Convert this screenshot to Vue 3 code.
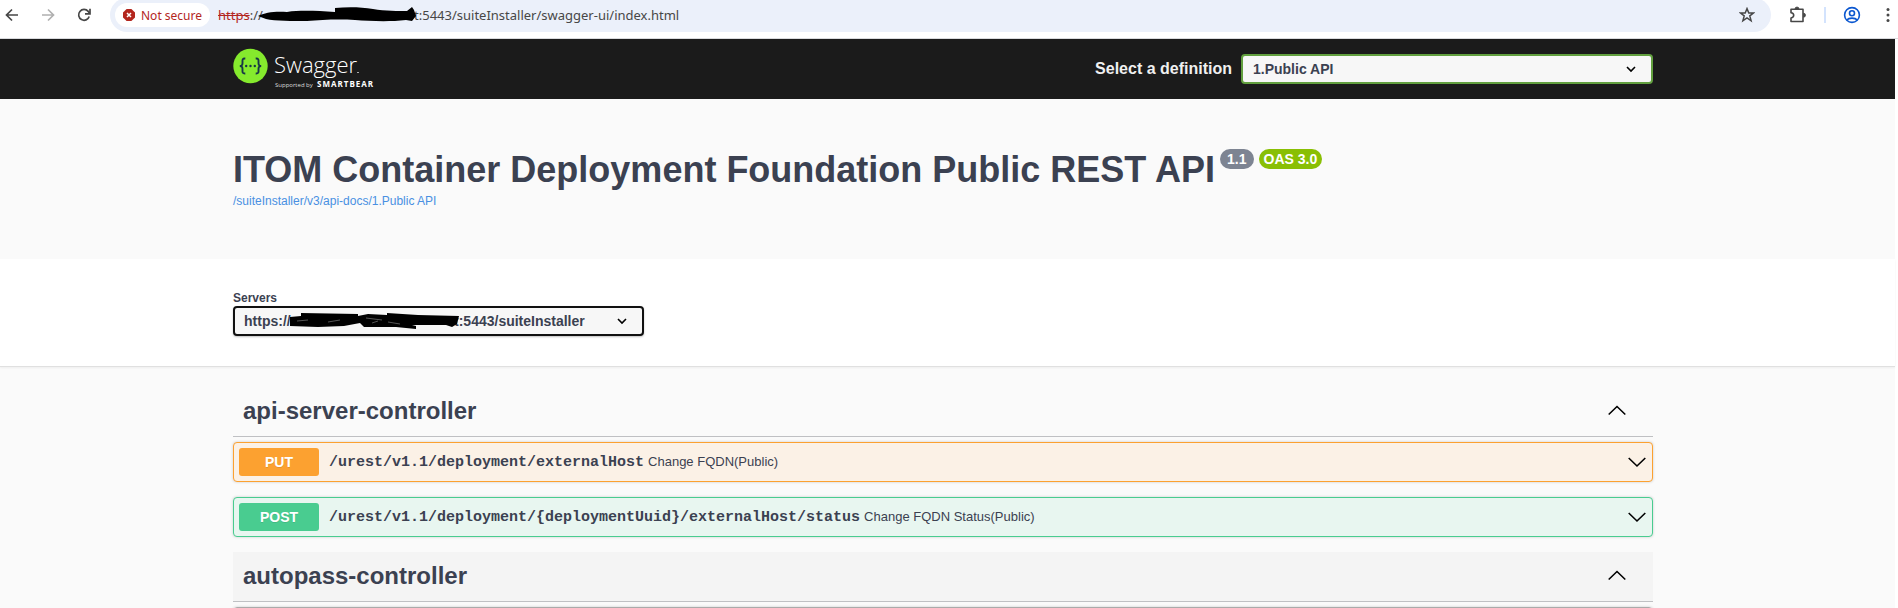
<script setup>
import { ref } from 'vue'

const gap = '\u00a0'.repeat(42)
const definition = ref('1.Public API')
const server = ref('main')
const servers = [{ id: 'main', label: `https://${gap}t:5443/suiteInstaller` }]

const sections = [
  {
    name: 'api-server-controller',
    hovered: false,
    operations: [
      { method: 'PUT', path: '/urest/v1.1/deployment/externalHost', summary: 'Change FQDN(Public)' },
      { method: 'POST', path: '/urest/v1.1/deployment/{deploymentUuid}/externalHost/status', summary: 'Change FQDN Status(Public)' },
    ],
  },
  { name: 'autopass-controller', hovered: true, operations: [] },
]
</script>

<template>
  <div class="window">
    <header class="browser">
      <nav class="nav">
        <button class="icon" aria-label="Back">
          <svg width="16" height="16" viewBox="0 0 16 16"><path d="M14 8H3M8 2.5L2.5 8L8 13.5" fill="none" stroke="#474747" stroke-width="1.7" /></svg>
        </button>
        <button class="icon" aria-label="Forward">
          <svg width="16" height="16" viewBox="0 0 16 16"><path d="M2 8H13M8 2.5L13.5 8L8 13.5" fill="none" stroke="#b0b0b0" stroke-width="1.7" /></svg>
        </button>
        <button class="icon" aria-label="Reload">
          <svg width="16" height="16" viewBox="0 0 16 16"><path d="M13.2 9.5A5.4 5.4 0 1 1 12.2 4.4L13.5 6" fill="none" stroke="#474747" stroke-width="1.7" /><path d="M14 1.8V6.8H9" fill="none" stroke="#474747" stroke-width="1.7" /></svg>
        </button>
      </nav>
      <div class="address">
        <button class="chip">
          <svg width="12" height="12" viewBox="0 0 12 12"><path d="M3.6 0H8.4L12 3.6V8.4L8.4 12H3.6L0 8.4V3.6Z" fill="#b3261e" /><path d="M4 4L8 8M8 4L4 8" stroke="#fff" stroke-width="1.5" /></svg>
          Not secure
        </button>
        <div class="url">
          <span><s>https</s>://</span>
          <span class="rest">t:5443/suiteInstaller/swagger-ui/index.html</span>
          <svg class="scribble" width="162" height="18" viewBox="0 0 162 18">
            <path d="M1 9C8 5 20 4 30 5C44 3 60 4 78 5V1C90 0 104 0 116 2C128 4 142 4 150 4L155 0L157 3L159 9L155 14L149 13C132 15 112 14 98 13C80 12 64 13 50 14C36 14 18 14 9 12Z" fill="#000" />
          </svg>
        </div>
        <button class="icon star" aria-label="Bookmark">
          <svg width="16" height="16" viewBox="0 0 16 16"><path d="M8 1.6L9.8 6H14.5L10.8 8.9L12.1 13.8L8 11L3.9 13.8L5.2 8.9L1.5 6H6.2Z" fill="none" stroke="#474747" stroke-width="1.5" /></svg>
        </button>
      </div>
      <div class="tools">
        <button class="icon" aria-label="Extensions">
          <svg width="18" height="18" viewBox="0 0 18 18"><path d="M2 3.2H14V15.5H2V12C5.6 11.5 5.6 7.2 2 6.8Z" fill="none" stroke="#474747" stroke-width="1.6" stroke-linejoin="round" /><path d="M6 3A2 2 0 0 1 10 3ZM14.5 7.2A2 2 0 0 1 14.5 11.2Z" fill="#474747" stroke="#474747" stroke-width="0.8" /></svg>
        </button>
        <span class="divider"></span>
        <button class="icon" aria-label="Profile">
          <svg width="18" height="18" viewBox="0 0 18 18" fill="none" stroke="#0b57d0" stroke-width="1.6"><circle cx="9" cy="9" r="7.4" /><circle cx="9" cy="7.2" r="2.5" /><path d="M3.7 14C6 11.5 12 11.5 14.3 14" /></svg>
        </button>
        <button class="icon" aria-label="Menu">
          <svg width="4" height="16" viewBox="0 0 4 16" fill="#474747"><circle cx="2" cy="2.5" r="1.5" /><circle cx="2" cy="8" r="1.5" /><circle cx="2" cy="13.5" r="1.5" /></svg>
        </button>
      </div>
    </header>

    <main class="page">
      <div class="topbar">
        <div class="wrap bar">
          <a class="logo" href="#" aria-label="Swagger">
            <svg width="145" height="44" viewBox="0 0 145 44">
              <circle cx="17.5" cy="19" r="17.2" fill="#85ea2d" />
              <g fill="none" stroke="#173647" stroke-width="1.9">
                <path d="M12.3 11.5C9.2 11.3 9.4 13 9.5 15C9.6 17.4 9.4 19 6.8 19C9.4 19 9.6 20.6 9.5 23C9.4 25 9.2 26.7 12.3 26.5" />
                <path d="M22.7 11.5C25.8 11.3 25.6 13 25.5 15C25.4 17.4 25.6 19 28.2 19C25.6 19 25.4 20.6 25.5 23C25.6 25 25.8 26.7 22.7 26.5" />
              </g>
              <g fill="#173647"><circle cx="13.2" cy="19" r="1.2" /><circle cx="17.5" cy="19" r="1.2" /><circle cx="21.8" cy="19" r="1.2" /></g>
              <path d="M124 25.500H126" stroke="#aaa" />
              <text class="brand" x="41" y="26">Swagger</text>
              <text class="support" x="42" y="40">Supported by</text>
              <text class="bear" x="84" y="40">SMARTBEAR</text>
            </svg>
          </a>
          <label class="pick">
            <span>Select a definition</span>
            <select v-model="definition" class="select green">
              <option>1.Public API</option>
            </select>
          </label>
        </div>
      </div>

      <section class="wrap info">
        <div class="heading">
          <h1>ITOM Container Deployment Foundation Public REST API</h1>
          <span class="badge">1.1</span>
          <span class="badge oas">OAS 3.0</span>
        </div>
        <a class="doc" href="#">/suiteInstaller/v3/api-docs/1.Public API</a>
      </section>

      <section class="scheme">
        <div class="wrap">
          <label class="servers" for="servers">Servers</label>
          <div class="server-box">
            <select id="servers" v-model="server" class="select dark">
              <option v-for="s in servers" :key="s.id" :value="s.id">{{ s.label }}</option>
            </select>
            <svg class="scribble" width="174" height="18" viewBox="0 0 174 18">
              <path d="M2 5L13 4V1L70 2V4L80 2L99 3V1L130 3L171 4L169 12L164 15L158 13L124 13L128 14V17L108 15L76 15L72 11L56 14L30 15L2 14Z" fill="#000" />
              <path d="M9 9L20 8M40 10L52 8M78 6L94 8M84 11L90 9M100 10L112 12" stroke="#777" stroke-width="0.7" />
            </svg>
          </div>
        </div>
      </section>

      <div class="wrap sections">
        <section v-for="s in sections" :key="s.name">
          <h2 :class="{ hovered: s.hovered }">
            <span>{{ s.name }}</span>
            <button class="icon" :aria-label="`Collapse ${s.name}`">
              <svg width="20" height="20" viewBox="0 0 20 20"><path d="M1.700 13.500L10 5.500L18.300 13.500" fill="none" stroke="#000" stroke-width="1.6" /></svg>
            </button>
          </h2>
          <div v-for="o in s.operations" :key="o.path" class="op" :class="o.method.toLowerCase()">
            <span class="method">{{ o.method }}</span>
            <a class="path" href="#">{{ o.path }}</a>
            <span class="summary">{{ o.summary }}</span>
            <button class="icon" :aria-label="`Expand ${o.path}`">
              <svg width="20" height="20" viewBox="0 0 20 20"><path d="M1.700 6L10 14L18.300 6" fill="none" stroke="#000" stroke-width="1.6" /></svg>
            </button>
          </div>
          <div v-if="!s.operations.length" class="op"></div>
        </section>
      </div>
    </main>
  </div>
</template>

<style>
body {
  background: #fff;
}
</style>

<style scoped>
* {
  box-sizing: border-box;
}
.window {
  height: 100vh;
  overflow: hidden;
  display: flex;
  flex-direction: column;
  font-family: "Liberation Sans", Arial, sans-serif;
  color: #3b4151;
}
.icon {
  display: flex;
  flex: none;
  padding: 0;
  border: 0;
  background: none;
}
.browser {
  flex: none;
  display: flex;
  align-items: center;
  height: 39px;
  padding: 0 8px 8px 4px;
  border-bottom: 1px solid #d9dadd;
  font-family: "Noto Sans", "Open Sans", sans-serif;
}
.nav {
  display: flex;
  gap: 20px;
  margin-right: 18px;
}
.address {
  flex: 1;
  display: flex;
  align-items: center;
  height: 34px;
  padding: 0 16px 0 5px;
  border-radius: 17px;
  background: #ebf0fa;
}
.chip {
  display: flex;
  align-items: center;
  gap: 6px;
  height: 24px;
  padding: 0 8px;
  border: 0;
  border-radius: 12px;
  background: #fff;
  color: #b3261e;
  font: 12px "Noto Sans", "Open Sans", sans-serif;
}
.url {
  position: relative;
  flex: 1;
  display: flex;
  padding-left: 8px;
  font-size: 13px;
  line-height: 18px;
  color: #474747;
}
.url s {
  color: #b3261e;
}
.url .rest {
  position: absolute;
  left: 204px;
}
.url .scribble {
  position: absolute;
  left: 47px;
  top: 1px;
}
.tools {
  display: flex;
  align-items: center;
  gap: 17px;
  margin-left: 18px;
}
.divider {
  width: 2px;
  height: 16px;
  background: #d3e3fd;
}
.tools .icon:last-child {
  margin-left: 8px;
}
.page {
  flex: 1;
  margin-right: 3px;
  background: #fafafa;
}
.wrap {
  width: calc(100% - 475px);
  min-width: 900px;
  margin-left: 233px;
}
.topbar {
  background: #1b1b1b;
}
.bar {
  display: flex;
  align-items: center;
  justify-content: space-between;
  height: 60px;
}
.logo,
.logo svg {
  display: block;
}
.brand {
  font: 300 22px "Open Sans", sans-serif;
  fill: #fff;
}
.support {
  font: 6px "Open Sans", sans-serif;
  fill: #ddd;
}
.bear {
  font: bold 8px "Open Sans", sans-serif;
  letter-spacing: 1px;
  fill: #fff;
}
.pick {
  display: flex;
  align-items: center;
  gap: 9px;
  color: #f0f0f0;
  font-size: 16px;
  font-weight: bold;
}
.select {
  appearance: none;
  width: 412px;
  height: 30px;
  padding: 0 40px 0 10px;
  border: 2px solid #62a03f;
  border-radius: 4px;
  background: #f7f7f7 url("data:image/svg+xml,%3Csvg xmlns='http://www.w3.org/2000/svg' width='10' height='8' viewBox='0 0 10 8'%3E%3Cpath d='M1 2L5 6L9 2' fill='none' stroke='%23000' stroke-width='1.600'/%3E%3C/svg%3E") right 15px center no-repeat;
  color: #3b4151;
  font: bold 14px "Liberation Sans", Arial, sans-serif;
}
.dark {
  width: 100%;
  padding-left: 9px;
  border-color: #111;
  box-shadow: 0 1px 2px rgba(0, 0, 0, 0.25);
}
.info {
  height: 160px;
  padding-top: 50px;
}
.heading {
  display: flex;
  gap: 5px;
}
h1 {
  margin: 0;
  font-size: 36px;
  line-height: 42px;
}
.badge {
  height: 20px;
  padding: 0 7px;
  border-radius: 10px;
  background: #7d8492;
  color: #fff;
  font-size: 14px;
  font-weight: bold;
  line-height: 20px;
}
.oas {
  padding: 0 5px;
  background: #89bf04;
}
.doc {
  display: block;
  font-size: 12px;
  line-height: 20px;
  color: #4990e2;
  text-decoration: none;
}
.scheme {
  height: 108px;
  padding-top: 32px;
  background: #fff;
  border-bottom: 1px solid #e0e0e0;
  box-shadow: 0 1px 2px rgba(0, 0, 0, 0.05);
}
.servers {
  display: block;
  font-size: 12px;
  font-weight: bold;
  line-height: 15px;
}
.server-box {
  position: relative;
  width: 411px;
}
.server-box .select {
  display: block;
}
.server-box .scribble {
  position: absolute;
  left: 55px;
  top: 6px;
}
.sections {
  padding-top: 20px;
}
h2 {
  display: flex;
  align-items: center;
  justify-content: space-between;
  height: 50px;
  margin: 0 0 5px;
  padding: 0 26px 2px 10px;
  border-bottom: 1px solid #bfc0c3;
  font-size: 24px;
  line-height: 28px;
}
.hovered {
  background: #f4f4f4;
}
.op {
  display: flex;
  align-items: center;
  height: 40px;
  margin-bottom: 15px;
  padding: 0 5px;
  border: 1px solid #aaa;
  border-radius: 4px;
  box-shadow: 0 0 3px rgba(0, 0, 0, 0.19);
}
.put {
  border-color: #fca130;
  background: #fbf1e6;
}
.post {
  border-color: #49cc90;
  background: #e8f6f0;
}
.method {
  width: 80px;
  height: 28px;
  border-radius: 3px;
  background: #49cc90;
  color: #fff;
  font-size: 14px;
  font-weight: bold;
  line-height: 28px;
  text-align: center;
  text-shadow: 0 1px 0 rgba(0, 0, 0, 0.1);
}
.put .method {
  background: #fca130;
}
.path {
  padding: 0 4px 0 10px;
  color: #3b4151;
  font: bold 15px "Liberation Mono", monospace;
  text-decoration: none;
}
.summary {
  flex: 1;
  padding-bottom: 2px;
  font-size: 13px;
}
</style>
